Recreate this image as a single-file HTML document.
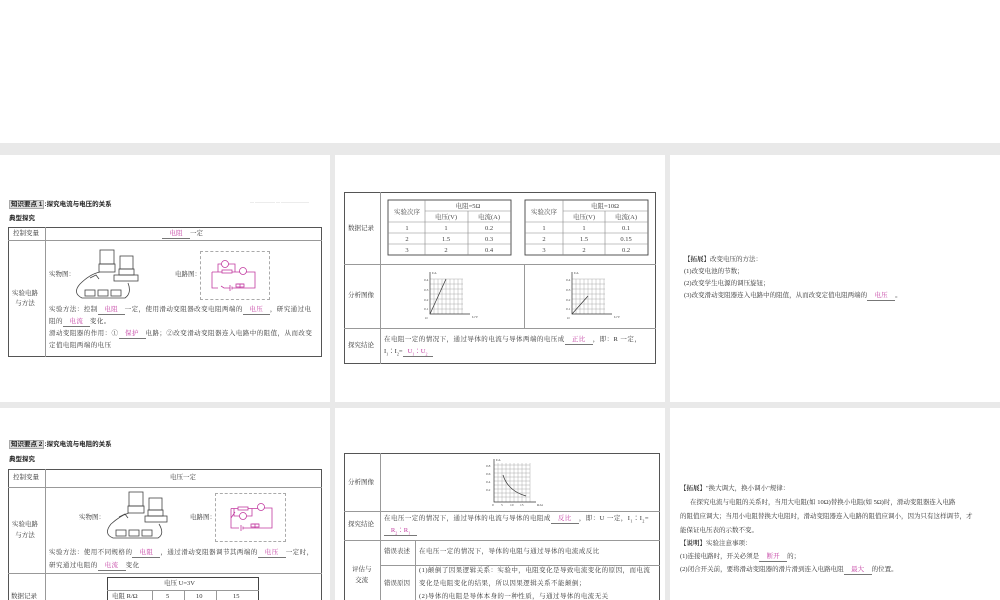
<!DOCTYPE html>
<html><head><meta charset="utf-8"><style>
*{margin:0;padding:0;box-sizing:border-box}
html,body{width:1000px;height:600px;overflow:hidden}
body{background:#e9e9e9;position:relative;font-family:"Liberation Serif","Noto Serif CJK SC","Noto Sans CJK SC",serif;color:#333;font-size:6.5px}
.p{position:absolute;background:#fff}
.a{position:absolute;white-space:nowrap;line-height:1}
.b{font-family:"Liberation Sans","Noto Sans CJK SC",sans-serif;font-weight:bold;color:#222}
.tl{position:absolute;background:#999}
.f{color:#c23aa0;display:inline-block;border-bottom:0.7px solid #777;text-align:center}
.c{text-align:center}
.ls{letter-spacing:0.45px}
</style></head><body>
<div class="p" style="left:0;top:0;width:1000px;height:143px"></div>
<div class="p" style="left:0;top:155px;width:330px;height:247px"></div>
<div class="p" style="left:335px;top:155px;width:330px;height:247px"></div>
<div class="p" style="left:670px;top:155px;width:330px;height:247px"></div>
<div class="p" style="left:0;top:408px;width:330px;height:192px"></div>
<div class="p" style="left:335px;top:408px;width:330px;height:192px"></div>
<div class="p" style="left:670px;top:408px;width:330px;height:192px"></div>

<!-- Panel 1 -->
<div class="a b" style="left:9px;top:202px"><span style="background:#ddd;border:0.5px solid #aaa;padding:0 1px">知识要点 1</span>:探究电流与电压的关系</div>
<div class="a" style="left:250px;top:200px;font-size:4px;color:#aaa">— ————— —  ———————</div>
<div class="a b" style="left:9px;top:216px">典型探究</div>
<div style="position:absolute;left:8px;top:227px;width:314px;height:130px;border:1px solid #555"></div>
<div class="tl" style="left:8px;top:240px;width:314px;height:0.8px"></div>
<div class="tl" style="left:45px;top:227px;width:0.8px;height:130px"></div>
<div class="a" style="left:13px;top:231px">控制变量</div>
<div class="a" style="left:162px;top:231px"><span class="f" style="width:28px">电阻</span>一定</div>
<div class="a c" style="left:12px;top:289px;line-height:10px">实验电路<br>与方法</div>
<div class="a" style="left:49px;top:272px">实物图：</div>
<svg style="position:absolute;left:70px;top:248px" width="70" height="55" viewBox="0 0 70 55" fill="none" stroke="#444" stroke-width="0.8">
<rect x="30" y="2" width="14" height="14"/><rect x="29" y="16" width="16" height="8"/>
<rect x="50" y="8" width="13" height="13"/><rect x="49" y="21" width="15" height="6"/>
<rect x="44" y="27" width="24" height="6"/>
<path d="M10 36 Q2 45 12 50 L55 50 Q62 45 58 35 M10 36 Q20 26 30 24 M20 30 l6 -3 l3 4"/>
<rect x="15" y="42" width="10" height="6"/><rect x="28" y="42" width="10" height="6"/><rect x="41" y="42" width="10" height="6"/>
</svg>
<div class="a" style="left:175px;top:272px">电路图：</div>
<div style="position:absolute;left:200px;top:251px;width:70px;height:49px;border:0.8px dashed #aaa"></div>
<svg style="position:absolute;left:210px;top:258px" width="50" height="36" viewBox="0 0 50 36" fill="none" stroke="#c23aa0" stroke-width="0.8">
<circle cx="15" cy="6" r="3.5"/><rect x="12" y="12" width="10" height="3"/><circle cx="33" cy="13" r="3.5"/>
<path d="M2 14 H12 M22 14 H29.5 M36.5 14 H45 V30 H30 M2 14 V30 H8 M11 28 L14 30 H20 M20 27 V33 M22 28.5 V31.5 M22 30 H30 V26 M27 26 H34 M8 14 V6 H11.5 M18.5 6 H25 V14"/>
<rect x="26" y="26" width="8" height="3"/>
</svg>
<div class="a ls" style="left:49px;top:307px">实验方法：控制<span class="f" style="width:27px">电阻</span>一定，使用滑动变阻器改变电阻两端的<span class="f" style="width:27px">电压</span>，研究通过电</div>
<div class="a ls" style="left:49px;top:319px">阻的<span class="f" style="width:27px">电流</span>变化。</div>
<div class="a ls" style="left:49px;top:331px">滑动变阻器的作用：①<span class="f" style="width:27px">保护</span>电路；②改变滑动变阻器连入电路中的阻值，从而改变</div>
<div class="a ls" style="left:49px;top:343px">定值电阻两端的电压</div>

<!-- Panel 2 -->
<div style="position:absolute;left:344px;top:192px;width:312px;height:172px;border:1px solid #555"></div>
<div class="tl" style="left:344px;top:264px;width:312px;height:0.8px"></div>
<div class="tl" style="left:344px;top:328px;width:312px;height:0.8px"></div>
<div class="tl" style="left:380px;top:192px;width:0.8px;height:172px"></div>
<div class="tl" style="left:524px;top:264px;width:0.8px;height:64px"></div>
<div class="a" style="left:348px;top:226px">数据记录</div>
<div class="a" style="left:348px;top:293px">分析图像</div>
<div class="a" style="left:348px;top:343px">探究结论</div>
<svg style="position:absolute;left:387px;top:199px" width="264" height="60" viewBox="0 0 264 60" fill="none" stroke="#888" stroke-width="0.6">
<rect x="1" y="1" width="123" height="55" stroke="#444" stroke-width="0.9"/>
<path d="M38 1V56 M81 12V56 M38 12H124 M1 23H124 M1 34H124 M1 45H124"/>
<rect x="138" y="1" width="123" height="55" stroke="#444" stroke-width="0.9"/>
<path d="M176 1V56 M218 12V56 M176 12H261 M138 23H261 M138 34H261 M138 45H261"/>
<g fill="#444" stroke="none" font-size="6.5" font-family="Liberation Serif, Noto Serif CJK SC, serif" text-anchor="middle">
<text x="20" y="15">实验次序</text><text x="81" y="9">电阻=5Ω</text><text x="59" y="20">电压(V)</text><text x="102" y="20">电流(A)</text>
<text x="20" y="31">1</text><text x="59" y="31">1</text><text x="102" y="31">0.2</text>
<text x="20" y="42">2</text><text x="59" y="42">1.5</text><text x="102" y="42">0.3</text>
<text x="20" y="53">3</text><text x="59" y="53">2</text><text x="102" y="53">0.4</text>
<text x="157" y="15">实验次序</text><text x="218" y="9">电阻=10Ω</text><text x="197" y="20">电压(V)</text><text x="239" y="20">电流(A)</text>
<text x="157" y="31">1</text><text x="197" y="31">1</text><text x="239" y="31">0.1</text>
<text x="157" y="42">2</text><text x="197" y="42">1.5</text><text x="239" y="42">0.15</text>
<text x="157" y="53">3</text><text x="197" y="53">2</text><text x="239" y="53">0.2</text>
</g></svg>
<svg style="position:absolute;left:420px;top:270px" width="60" height="50" viewBox="0 0 60 50" fill="none" stroke="#999" stroke-width="0.4">
<path d="M10 9H43 M10 14H43 M10 19H43 M10 24H43 M10 29H43 M10 34H43 M10 39H43 M14 9V44 M18 9V44 M22 9V44 M26 9V44 M30 9V44 M34 9V44 M38 9V44 M42 9V44"/>
<path d="M10 2V44H50" stroke="#333" stroke-width="0.7"/><path d="M10 44L26 9" stroke="#333" stroke-width="0.7"/>
<g fill="#444" stroke="none" font-size="3.5"><text x="4" y="11">0.4</text><text x="4" y="21">0.3</text><text x="4" y="31">0.2</text><text x="4" y="40">0.1</text><text x="5" y="49">O</text><text x="12" y="4">I/A</text><text x="52" y="48">U/V</text></g></svg>
<svg style="position:absolute;left:562px;top:270px" width="60" height="50" viewBox="0 0 60 50" fill="none" stroke="#999" stroke-width="0.4">
<path d="M10 9H43 M10 14H43 M10 19H43 M10 24H43 M10 29H43 M10 34H43 M10 39H43 M14 9V44 M18 9V44 M22 9V44 M26 9V44 M30 9V44 M34 9V44 M38 9V44 M42 9V44"/>
<path d="M10 2V44H50" stroke="#333" stroke-width="0.7"/><path d="M10 44L26 26" stroke="#333" stroke-width="0.7"/>
<g fill="#444" stroke="none" font-size="3.5"><text x="4" y="11">0.4</text><text x="4" y="21">0.3</text><text x="4" y="31">0.2</text><text x="4" y="40">0.1</text><text x="5" y="49">O</text><text x="12" y="4">I/A</text><text x="52" y="48">U/V</text></g></svg>
<div class="a ls" style="left:384px;top:337px">在电阻一定的情况下，通过导体的电流与导体两端的电压成<span class="f" style="width:28px">正比</span>，即：R 一定，</div>
<div class="a" style="left:384px;top:349px">I<sub style="font-size:4px">1</sub>∶I<sub style="font-size:4px">2</sub>=<span class="f" style="width:30px">U<sub style="font-size:4px">1</sub>∶U<sub style="font-size:4px">2</sub></span></div>

<!-- Panel 3 -->
<div class="a" style="left:684px;top:257px"><b>【拓展】</b>改变电压的方法：</div>
<div class="a" style="left:684px;top:269px">(1)改变电池的节数；</div>
<div class="a" style="left:684px;top:281px">(2)改变学生电源的调压旋钮；</div>
<div class="a" style="left:684px;top:293px">(3)改变滑动变阻器连入电路中的阻值，从而改变定值电阻两端的<span class="f" style="width:28px">电压</span>。</div>

<!-- Row2 panel 1 -->
<div class="a b" style="left:9px;top:442px"><span style="background:#ddd;border:0.5px solid #aaa;padding:0 1px">知识要点 2</span>:探究电流与电阻的关系</div>
<div class="a b" style="left:9px;top:457px">典型探究</div>
<div style="position:absolute;left:8px;top:469px;width:314px;height:131px;border:1px solid #555;border-bottom:none"></div>
<div class="tl" style="left:8px;top:487px;width:314px;height:0.8px"></div>
<div class="tl" style="left:8px;top:573px;width:314px;height:0.8px"></div>
<div class="tl" style="left:45px;top:469px;width:0.8px;height:131px"></div>
<div class="a" style="left:13px;top:475px">控制变量</div>
<div class="a" style="left:170px;top:475px">电压一定</div>
<div class="a c" style="left:12px;top:519px;line-height:11px">实验电路<br>与方法</div>
<div class="a" style="left:79px;top:515px">实物图：</div>
<svg style="position:absolute;left:103px;top:490px" width="70" height="52" viewBox="0 0 70 52" fill="none" stroke="#444" stroke-width="0.8">
<rect x="26" y="2" width="14" height="14"/><rect x="25" y="16" width="16" height="7"/>
<rect x="46" y="8" width="13" height="12"/><rect x="45" y="20" width="15" height="6"/>
<rect x="42" y="26" width="22" height="6"/>
<path d="M8 34 Q0 44 10 48 L55 48 Q62 44 56 34 M8 34 Q18 25 26 23 M16 27 l6 -3 l3 4"/>
<rect x="13" y="40" width="10" height="6"/><rect x="26" y="40" width="10" height="6"/><rect x="39" y="40" width="10" height="6"/>
</svg>
<div class="a" style="left:190px;top:515px">电路图：</div>
<div style="position:absolute;left:215px;top:493px;width:71px;height:49px;border:0.8px dashed #aaa"></div>
<svg style="position:absolute;left:225px;top:500px" width="50" height="34" viewBox="0 0 50 34" fill="none" stroke="#c23aa0" stroke-width="0.8">
<rect x="13" y="7" width="10" height="3"/><circle cx="18" cy="16" r="3.5"/><circle cx="36" cy="7" r="3.5"/>
<path d="M6 8.5 H13 M23 8.5 H32.5 M39.5 8 H47 V28 H30 M6 8.5 V28 H14 M10 12 L6 18 M16 25 V31 M18 26.5 V29.5 M18 28 H30 V24 M27 24 H34 M9 8.5 V16 H14.5 M21.5 16 H27 V8.5"/>
<rect x="26" y="24" width="8" height="3"/>
</svg>
<div class="a ls" style="left:49px;top:550px">实验方法：使用不同规格的<span class="f" style="width:28px">电阻</span>，通过滑动变阻器调节其两端的<span class="f" style="width:28px">电压</span>一定时，</div>
<div class="a ls" style="left:49px;top:563px">研究通过电阻的<span class="f" style="width:28px">电流</span>变化</div>
<div class="a" style="left:11px;top:594px">数据记录</div>
<div style="position:absolute;left:107px;top:577px;width:152px;height:23px;border:0.9px solid #444;border-bottom:none"></div>
<div class="tl" style="left:107px;top:590px;width:152px;height:0.6px"></div>
<div class="tl" style="left:152px;top:590px;width:0.6px;height:10px"></div>
<div class="tl" style="left:184px;top:590px;width:0.6px;height:10px"></div>
<div class="tl" style="left:216px;top:590px;width:0.6px;height:10px"></div>
<div class="a" style="left:164px;top:581px">电压 U=3V</div>
<div class="a" style="left:112px;top:594px">电阻 R/Ω</div>
<div class="a" style="left:166px;top:594px">5</div>
<div class="a" style="left:196px;top:594px">10</div>
<div class="a" style="left:233px;top:594px">15</div>

<!-- Row2 panel 2 -->
<div style="position:absolute;left:344px;top:453px;width:316px;height:147px;border:1px solid #555;border-bottom:none"></div>
<div class="tl" style="left:344px;top:511px;width:316px;height:0.8px"></div>
<div class="tl" style="left:344px;top:540px;width:316px;height:0.8px"></div>
<div class="tl" style="left:380px;top:565px;width:280px;height:0.8px"></div>
<div class="tl" style="left:380px;top:453px;width:0.8px;height:147px"></div>
<div class="tl" style="left:415px;top:540px;width:0.8px;height:60px"></div>
<div class="a" style="left:348px;top:480px">分析图像</div>
<svg style="position:absolute;left:484px;top:458px" width="70" height="50" viewBox="0 0 70 50" fill="none" stroke="#999" stroke-width="0.4">
<path d="M10 7H46 M10 11H46 M10 15H46 M10 19H46 M10 23H46 M10 27H46 M10 31H46 M10 35H46 M10 39H46 M14 5V44 M18 5V44 M22 5V44 M26 5V44 M30 5V44 M34 5V44 M38 5V44 M42 5V44 M46 5V44"/>
<path d="M10 1V44H52" stroke="#333" stroke-width="0.7"/><path d="M19 17Q24 33 42 38" stroke="#333" stroke-width="0.7"/>
<g fill="#444" stroke="none" font-size="3.5"><text x="2" y="9">0.8</text><text x="2" y="17">0.6</text><text x="2" y="25">0.4</text><text x="2" y="33">0.2</text><text x="8" y="48">0</text><text x="17" y="48">5</text><text x="26" y="48">10</text><text x="36" y="48">15</text><text x="12" y="3">I/A</text><text x="53" y="48">R/Ω</text></g></svg>
<div class="a" style="left:348px;top:522px">探究结论</div>
<div class="a ls" style="left:384px;top:516px">在电压一定的情况下，通过导体的电流与导体的电阻成<span class="f" style="width:28px">反比</span>，即：U 一定，I<sub style="font-size:4px">1</sub>∶I<sub style="font-size:4px">2</sub>=</div>
<div class="a" style="left:384px;top:528px"><span class="f" style="width:33px">R<sub style="font-size:4px">2</sub>∶R<sub style="font-size:4px">1</sub></span></div>
<div class="a c" style="left:352px;top:564px;line-height:11px">评估与<br>交流</div>
<div class="a" style="left:384px;top:549px">错误表述</div>
<div class="a ls" style="left:419px;top:549px">在电压一定的情况下，导体的电阻与通过导体的电流成反比</div>
<div class="a" style="left:384px;top:581px">错误原因</div>
<div class="a ls" style="left:419px;top:568px">(1)颠倒了因果逻辑关系：实验中，电阻变化是导致电流变化的原因，而电流</div>
<div class="a ls" style="left:419px;top:581px">变化是电阻变化的结果，所以因果逻辑关系不能颠倒；</div>
<div class="a ls" style="left:419px;top:594px">(2)导体的电阻是导体本身的一种性质，与通过导体的电流无关</div>

<!-- Row2 panel 3 -->
<div class="a" style="left:680px;top:486px"><b>【拓展】</b>"换大调大，换小调小"规律：</div>
<div class="a" style="left:690px;top:500px">在探究电流与电阻的关系时，当用大电阻(如 10Ω)替换小电阻(如 5Ω)时，滑动变阻器连入电路</div>
<div class="a" style="left:680px;top:514px">的阻值应调大；当用小电阻替换大电阻时，滑动变阻器连入电路的阻值应调小，因为只有这样调节，才</div>
<div class="a" style="left:680px;top:528px">能保证电压表的示数不变。</div>
<div class="a" style="left:680px;top:541px"><b>【说明】</b>实验注意事项：</div>
<div class="a" style="left:680px;top:554px">(1)连接电路时，开关必须是<span class="f" style="width:28px">断开</span>的；</div>
<div class="a" style="left:680px;top:567px">(2)闭合开关前，要将滑动变阻器的滑片滑到连入电路电阻<span class="f" style="width:28px">最大</span>的位置。</div>
</body></html>
